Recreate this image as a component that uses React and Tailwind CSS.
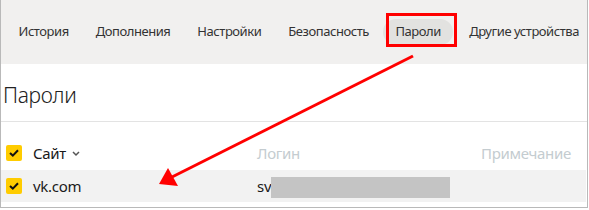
import React from "react";

const navItems = ["История", "Дополнения", "Настройки", "Безопасность", "Пароли", "Другие устройства"];

const Check = () => (
  <span className="flex items-center justify-center w-[16px] h-[16px] rounded-[2px] bg-[#ffcc00]">
    <svg width="10" height="8" viewBox="0 0 10 8">
      <path d="M1 4 L3.8 6.6 L9 1.2" fill="none" stroke="#111" strokeWidth="2" />
    </svg>
  </span>
);

const App = () => (
  <div className="relative w-[589px] h-[210px] bg-white font-['Noto_Sans',sans-serif] overflow-hidden">
    <div className="w-[588px] h-[208px] border-l border-r border-b border-[#b9b9b9] flex flex-col">
      {/* top tabs */}
      <div className="h-[64px] bg-[#f1f0ef] flex items-center pl-[4px] text-[13px] text-[#333] whitespace-nowrap">
        {navItems.map((item) =>
          item === "Пароли" ? (
            <span key={item} className="ml-[1px] mr-[3px] px-[12px] py-[3px] rounded-full bg-[#e2e2e0] tracking-[-0.45px]">
              {item}
            </span>
          ) : (
            <span key={item} className="px-[13.5px] tracking-[-0.45px]">
              {item}
            </span>
          )
        )}
      </div>

      <div className="h-[58px] border-b border-[#e3e3e3] flex items-center pl-[2px] pt-[6px]">
        <h1 className="text-[21px] text-[#222] font-light tracking-[-0.3px]">Пароли</h1>
      </div>

      {/* header */}
      <div className="h-[48px] flex items-center pl-[5px] pr-[16px] pt-[14px] text-[15px]">
        <Check />
        <span className="ml-[11px] text-[#1a1a1a] tracking-[-0.3px]">Сайт</span>
        <svg className="ml-[6px] mt-[2px]" width="8" height="6" viewBox="0 0 8 6">
          <path d="M1 1 L4 4 L7 1" fill="none" stroke="#555" strokeWidth="1.5" />
        </svg>
        <span className="ml-[177px] text-[#c4ccd0] tracking-[-0.3px]">Логин</span>
        <span className="ml-auto text-[#c4ccd0] tracking-[-0.3px]">Примечание</span>
      </div>

      {/* row */}
      <div className="h-[32px] bg-[#f2f2f2] flex items-center pl-[5px] mr-[1px] text-[15px] text-[#1a1a1a]">
        <Check />
        <span className="ml-[11px] w-[224px] tracking-[-0.3px]">vk.com</span>
        <span className="tracking-[-0.3px]">sv</span>
        <span className="mt-[2px] w-[179px] h-[21px] bg-[#c4c4c4]" />
      </div>
    </div>

    {/* annotation */}
    <div className="absolute left-[386px] top-[13px] w-[71px] h-[34px] border-[3px] border-[#ff0000]" />
    <svg className="absolute left-0 top-0" width="589" height="210" viewBox="0 0 589 210">
      <line x1="413" y1="56" x2="172" y2="177" stroke="#ff0000" strokeWidth="3" />
      <path d="M159 184 L168 168 L178 186 Z" fill="#ff0000" />
    </svg>
  </div>
);

export default App;
